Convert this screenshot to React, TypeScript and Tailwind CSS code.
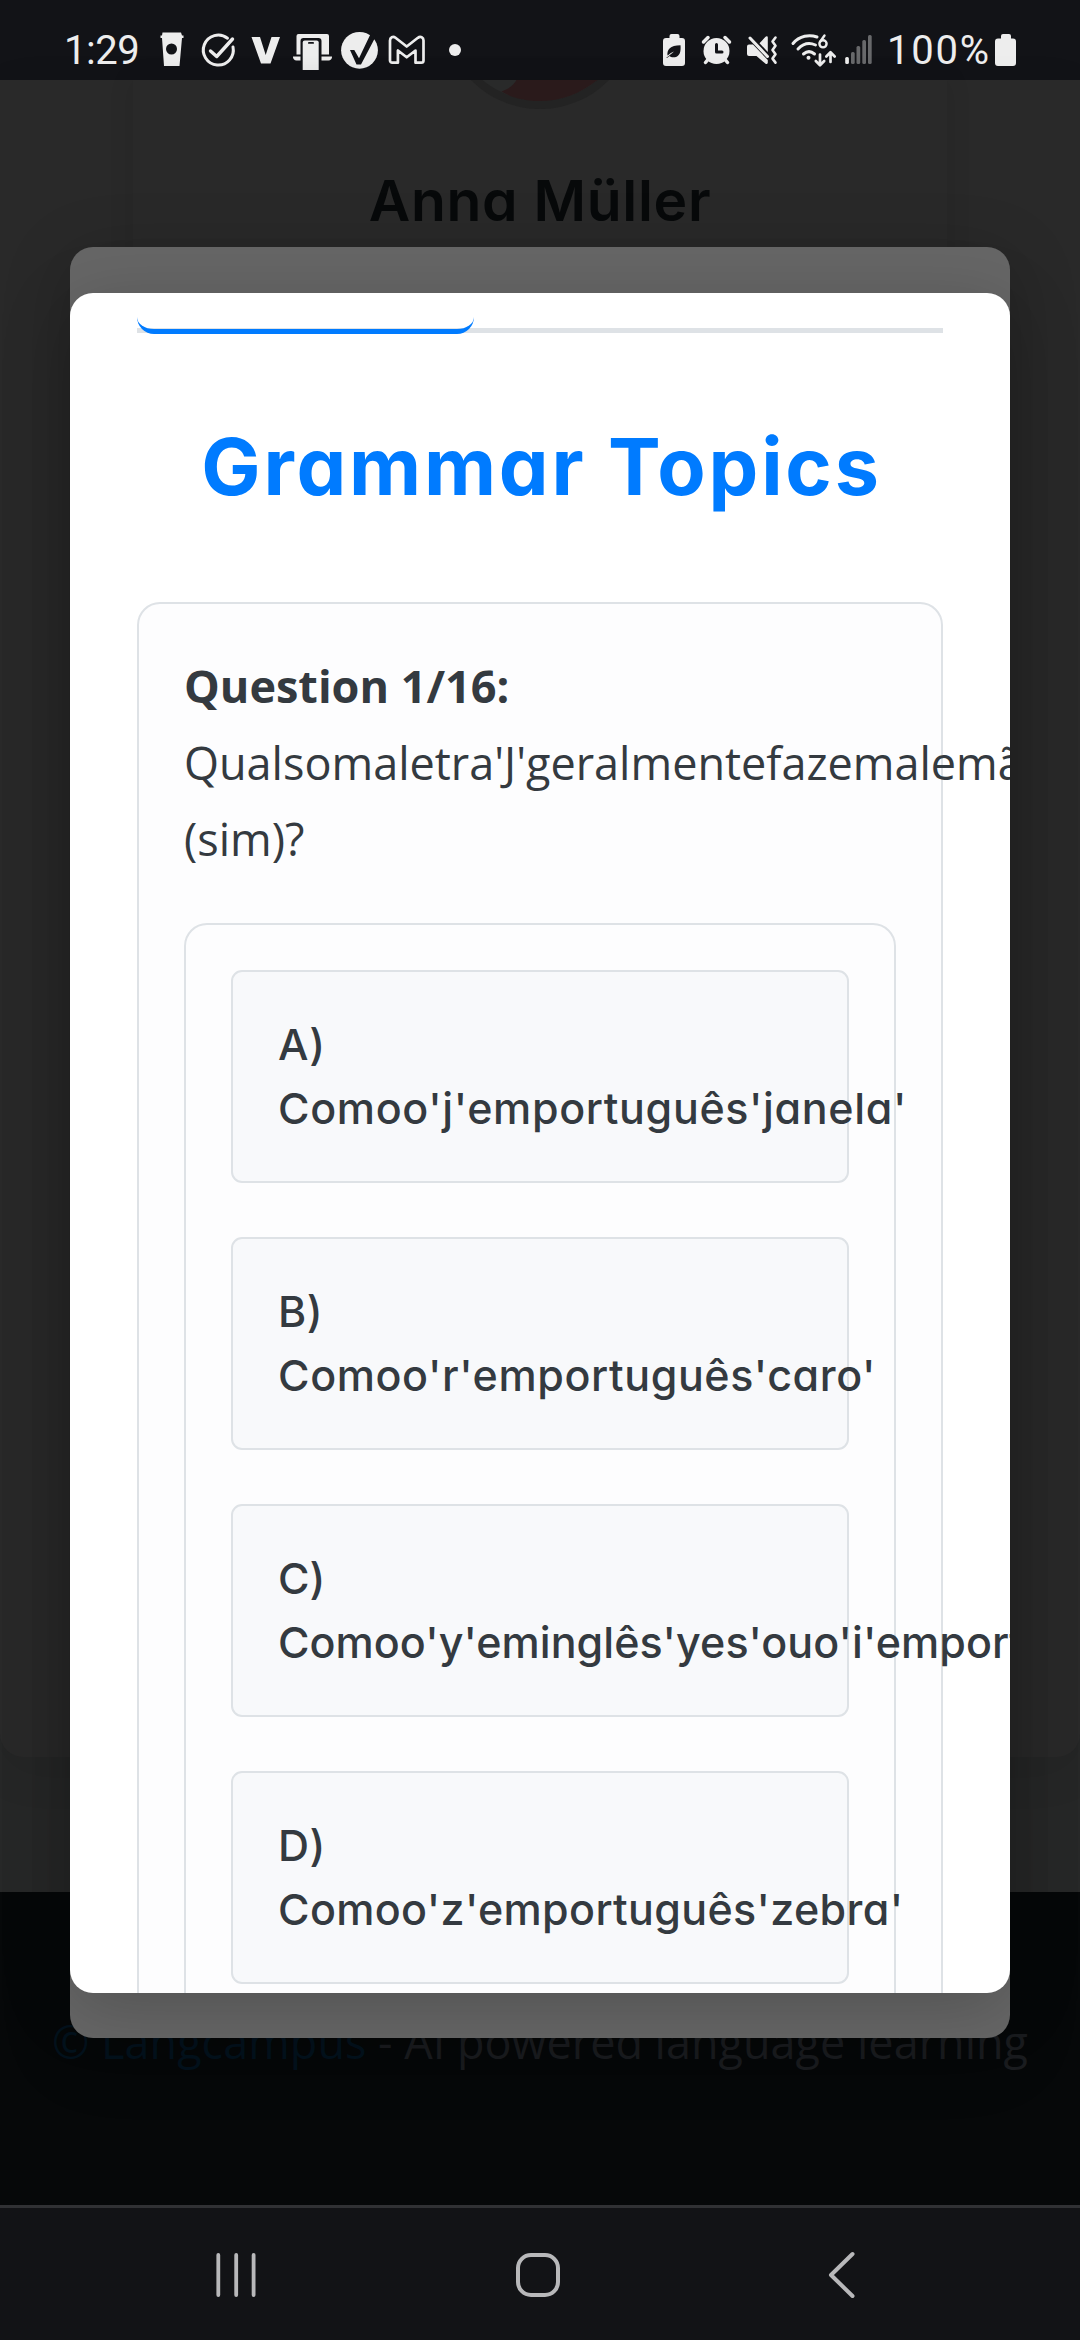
import type { ReactNode } from "react";

type IconProps = { x: number; y?: number; w: number; h?: number; className?: string; children: ReactNode };

function Glyph({ x, y = 30, w, h = 42, className = "", children }: IconProps) {
  return (
    <svg width={w} height={h} viewBox={`${x} ${y} ${w} ${h}`} className={`shrink-0 ${className}`} fill="#ededed">
      {children}
    </svg>
  );
}

function StatusBar() {
  return (
    <header className="flex h-[80px] items-start bg-[#121317] pt-[30px] text-[#ededed]">
      <span className="ml-[64px] w-[92px] whitespace-nowrap font-[Roboto] text-[40px] leading-[42px] tracking-[-0.5px]">1:29</span>
      <Glyph x={156} w={32}>
        <path d="M162.5 32.5h18.5l1 3h1.5v2.5h-1.5L179.500 66h-15.500L162 38h-1.500v-2.500h1.500z" />
        <circle cx="171.500" cy="49" r="5.500" fill="#121317" />
      </Glyph>
      <Glyph x={188} w={58}>
        <path d="M227.500 38.200A15 15 0 1 0 233 47" fill="none" stroke="#ededed" strokeWidth="3" strokeLinecap="round" />
        <path d="M210.500 51l6.200 5.500L232.500 39" fill="none" stroke="#ededed" strokeWidth="3.400" strokeLinecap="round" strokeLinejoin="round" />
      </Glyph>
      <Glyph x={246} w={44}>
        <path d="M251.500 37h8.500l5.700 18 5.800-18h8.500l-9.500 26.500h-9.500z" />
      </Glyph>
      <Glyph x={290} w={46}>
        <path d="M296.500 36a2 2 0 0 1 2-2h28.500a2 2 0 0 1 2 2v18.500h-7.500V41a3 3 0 0 0-3-3h-15a3 3 0 0 0-3 3v13.500h-4z" />
        <path d="M293 56.500h7.500V60.500h-4a3.500 3.500 0 0 1-3.500-4zM321.500 56.500H332a3.500 3.500 0 0 1-3.500 4h-7z" />
        <path d="M302.700 42.500a2 2 0 0 1 2-2h12a2 2 0 0 1 2 2V70h-16z" />
        <rect x="308" y="42" width="6" height="1.800" rx=".9" fill="#121317" />
      </Glyph>
      <Glyph x={336} w={48}>
        <circle cx="359.500" cy="50.300" r="18.400" />
        <path d="M350 50h4.300l4.700 8.300L371.500 32l4.500 4L361 64.500h-4.500z" fill="#121317" />
      </Glyph>
      <Glyph x={384} w={56}>
        <path d="M390 40.500c0-3.200 3-4.600 5.500-2.700L406.700 46.500l11.200-8.700c2.600-1.900 5.600-.5 5.600 2.700V60.500a2.200 2.200 0 0 1-2.200 2.200H415.500V50.500l-8.800 6.800-8.800-6.800v12.200H392.200a2.200 2.200 0 0 1-2.200-2.200z" fill="none" stroke="#ededed" strokeWidth="2.700" strokeLinejoin="round" />
      </Glyph>
      <Glyph x={440} w={30}>
        <circle cx="455" cy="50" r="6" />
      </Glyph>
      <div className="flex-1" />
      <Glyph x={660} w={36}>
        <path d="M669.500 36a2 2 0 0 1 2-2h6a2 2 0 0 1 2 2v2h2.500a3 3 0 0 1 3 3v22a3 3 0 0 1-3 3h-16a3 3 0 0 1-3-3V41a3 3 0 0 1 3-3h3.500z" />
        <path d="M680.500 45.200c.5 6-.5 11-5.500 12-2.500.5-4.500-.2-5.500-1.200-1.300 1.600-2.500 2-3.500 1.700 3-1.500 5.300-4 8-6.200-3.200 1.300-5 3-6.500 4-.7-5.500 2.500-10.300 13-10.300z" fill="#121317" />
      </Glyph>
      <Glyph x={696} w={44}>
        <circle cx="716.500" cy="51" r="13" />
        <path d="M703.500 42l4.500-4.500M729.500 42l-4.500-4.500M708 59.500l-2.500 3M725 59.500l2.500 3" stroke="#ededed" strokeWidth="3.500" strokeLinecap="round" />
        <path d="M716.500 44.500v7.500h5.500" fill="none" stroke="#121317" strokeWidth="3" strokeLinecap="round" strokeLinejoin="round" />
      </Glyph>
      <Glyph x={740} w={46}>
        <path d="M747 46.500a2 2 0 0 1 2-2h4l14.800 15.500V62.500c0 1.500-1.500 2-2.500 1L756.500 56H749a2 2 0 0 1-2-2zM767.800 37.500v14.500L759.500 43.200l5.800-6.200c1-1 2.500-.8 2.500.5z" />
        <path d="M750 38l17.500 18.500" stroke="#ededed" strokeWidth="3" strokeLinecap="round" />
        <path d="M775.500 37.500l-3 4 3 4.300-3 4.300 3 4.200-3 4.300 3 4" fill="none" stroke="#ededed" strokeWidth="2.600" strokeLinejoin="round" strokeLinecap="round" />
      </Glyph>
      <Glyph x={786} w={54}>
        <path d="M793 43.500c6.500-8 16.500-9.300 24-6.500M798 49c5.500-5.800 12-6.500 17.500-4M803.500 54c3.500-3 7.500-3 11 0" fill="none" stroke="#ededed" strokeWidth="3" strokeLinecap="round" />
        <circle cx="808.500" cy="57.800" r="2" />
        <circle cx="823" cy="43.800" r="3.600" fill="none" stroke="#ededed" strokeWidth="2.400" />
        <path d="M820 42l4.500-6.500" stroke="#ededed" strokeWidth="2.400" strokeLinecap="round" />
        <path d="M820 54.500V65M815.800 61l4.200 4.200L824.200 61M830.500 62V52.500M826.300 56.500l4.200-4.200 4.200 4.200" fill="none" stroke="#ededed" strokeWidth="2.700" strokeLinecap="round" strokeLinejoin="round" />
      </Glyph>
      <Glyph x={840} w={47}>
        <rect x="845.200" y="57" width="3.700" height="7" rx="1.500" />
        <g fill="#68696b">
          <rect x="851" y="52" width="3.700" height="12" rx="1.500" />
          <rect x="856.500" y="46" width="3.700" height="18" rx="1.500" />
          <rect x="862.300" y="40" width="3.700" height="24" rx="1.500" />
          <rect x="868" y="35" width="3.700" height="29" rx="1.500" />
        </g>
      </Glyph>
      <span className="w-[103px] whitespace-nowrap font-[Roboto] text-[40px] leading-[42px] tracking-[1.800px]">100%</span>
      <Glyph x={990} w={90}>
        <path d="M1001 36a2 2 0 0 1 2-2h6a2 2 0 0 1 2 2v2.500h2a3 3 0 0 1 3 3V63a3 3 0 0 1-3 3h-15a3 3 0 0 1-3-3V41.500a3 3 0 0 1 3-3h3z" />
      </Glyph>
    </header>
  );
}

function ProfilePage() {
  return (
    <main className="flex h-[1812px] flex-col bg-[#272828]">
      <section className="h-[1677px] rounded-b-[23px] bg-[#292929] px-[133px] shadow-[0_14px_50px_rgba(0,0,0,0.07)]">
        <div className="flex h-full flex-col items-center bg-[#292929] shadow-[0_0_24px_rgba(0,0,0,0.1)]">
          <svg width="194" height="29" viewBox="443 80 194 29" className="shrink-0">
            <circle cx="540" cy="12" r="97" fill="#232323" />
            <circle cx="540" cy="12" r="89" fill="#292a2a" />
            <path d="M517 79c-3 6-8 10-15.500 12.500C512 98 526 101 540 101c22 0 42-8 60-23z" fill="#2a1a1b" />
          </svg>
          <h2 className="mt-[49px] whitespace-nowrap font-[Inter] text-[57px] font-semibold leading-[86px] tracking-[0.700px] text-[#07090a] [font-feature-settings:'cv11']">
            Anna Müller
          </h2>
        </div>
      </section>
    </main>
  );
}

const options = [
  { letter: "A)", text: "Comoo'j'emportuguês'janela'", tracking: "tracking-[0.650px]" },
  { letter: "B)", text: "Comoo'r'emportuguês'caro'", tracking: "tracking-[0.600px]" },
  { letter: "C)", text: "Comoo'y'eminglês'yes'ouo'i'emportuguês", tracking: "tracking-[0.050px]" },
  { letter: "D)", text: "Comoo'z'emportuguês'zebra'", tracking: "tracking-[0.350px]" },
];

function QuizModal() {
  return (
    <div className="absolute left-[70px] top-[247px] h-[1791px] w-[940px] rounded-[23px] bg-[#666666] pt-[46px] shadow-[0_14px_70px_rgba(0,0,0,0.200)]">
      <div className="h-[1700px] overflow-hidden rounded-[23px] bg-white px-[67px] pt-[20px] shadow-[0_14px_70px_rgba(0,0,0,0.200)]">
        <div className="flex h-[20px] border-b-[5px] border-[#dee2e6]">
          <div className="h-[21px] w-[337px] shrink-0 rounded-b-[17px] border-b-[5px] border-[#007bff]" />
        </div>
        <h1 className="mt-[81px] flex h-[106px] items-start justify-center whitespace-nowrap pl-[3px] font-[Inter] text-[79px] font-[650] leading-[104px] tracking-[2.800px] text-[#007bff] [font-feature-settings:'cv11']">
          Grammar Topics
        </h1>
        <section className="mt-[82px] h-[1500px] rounded-[23px] border-2 border-[#dee2e6] bg-[#fdfdfe] px-[45px] pt-[44px]">
          <p className="whitespace-nowrap font-['Open_Sans'] text-[45px] leading-[76.500px] text-[#343a40]">
            <strong className="font-bold">Question 1/16:</strong>
            <br />
            Qualsomaletra'J'geralmentefazemalemão
            <br />
            (sim)?
          </p>
          <div className="mt-[45px] flex h-[1200px] flex-col gap-[54px] rounded-[23px] border-2 border-[#dee2e6] bg-[#fdfdfe] px-[45px] pt-[45px]">
            {options.map((o) => (
              <button
                key={o.letter}
                className={`block h-[213px] shrink-0 whitespace-nowrap rounded-[11px] border-2 border-[#dee2e6] bg-[#f8f9fb] px-[45px] text-left font-[Inter] text-[43px] font-medium leading-[64px] text-[#343a40] [font-feature-settings:'cv11'] ${o.tracking}`}
              >
                {o.letter}
                <br />
                {o.text}
              </button>
            ))}
          </div>
        </section>
      </div>
    </div>
  );
}

function NavBar() {
  return (
    <nav className="flex h-[135px] items-start border-t-[3px] border-[#303134] bg-[#121316] pt-[42px]">
      <Glyph x={210} y={2250} w={52} h={50} className="ml-[210px]">
        <path d="M218.300 2255v40M236.200 2255v40M253.600 2255v40" stroke="#b8b8ba" strokeWidth="3.800" strokeLinecap="round" />
      </Glyph>
      <Glyph x={510} y={2250} w={56} h={50} className="ml-[248px]">
        <rect x="518" y="2255" width="40" height="40" rx="13" fill="none" stroke="#b8b8ba" strokeWidth="4" />
      </Glyph>
      <Glyph x={820} y={2250} w={44} h={50} className="ml-[254px]">
        <path d="M852.500 2254L831 2275l21.500 21" fill="none" stroke="#b8b8ba" strokeWidth="4" strokeLinecap="round" strokeLinejoin="round" />
      </Glyph>
    </nav>
  );
}

export default function App() {
  return (
    <div className="relative h-[2340px] w-[1080px] overflow-hidden bg-[#060809]">
      <StatusBar />
      <ProfilePage />
      <footer className="h-[313px] bg-[#060809] pt-[112px] text-center font-['Open_Sans'] text-[45px] leading-[76px] text-[#1b1d20]">
        <p className="whitespace-nowrap">
          <a className="text-[#04131e]">© Langcampus</a> - AI powered language learning
        </p>
      </footer>
      <NavBar />
      <QuizModal />
    </div>
  );
}
